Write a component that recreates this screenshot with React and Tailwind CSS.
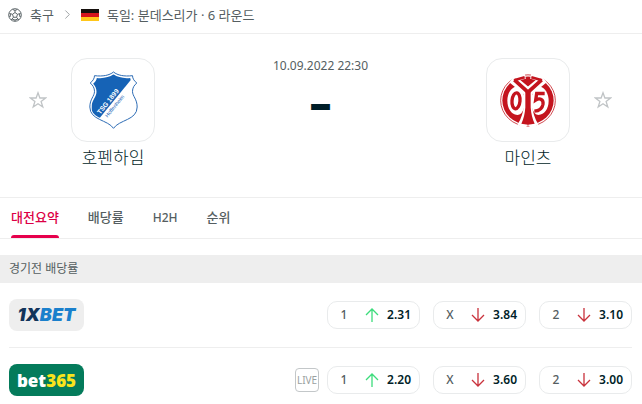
import { ChevronRight } from 'lucide-react';

const TABS = ['대전요약', '배당률', 'H2H', '순위'];

const BOOKMAKERS = [
  {
    id: '1xbet',
    live: false,
    odds: [
      { label: '1', value: '2.31', up: true },
      { label: 'X', value: '3.84', up: false },
      { label: '2', value: '3.10', up: false },
    ],
  },
  {
    id: 'bet365',
    live: true,
    odds: [
      { label: '1', value: '2.20', up: true },
      { label: 'X', value: '3.60', up: false },
      { label: '2', value: '3.00', up: false },
    ],
  },
];

const SoccerIcon = () => (
  <svg viewBox="0 0 28 28" className="h-[14px] w-[14px] shrink-0" fill="none" stroke="#5f686b" strokeWidth="2" aria-hidden="true">
    <circle cx="14" cy="14" r="12.6" />
    <path d="M14 9l5 3.7-1.9 5.8h-6.2L9 12.7zM14 9V5M19 12.7l4-1.4M17.1 18.5l2.7 3.6M10.9 18.5l-2.7 3.6M9 12.7l-4-1.4" />
    <path d="M9 2.8L14 5l5-2.2M25.8 10L23 11.3l.6 6 2.2.2M22 23.5l-2.2-1.4-5.8 2v2.3M6 23.5l2.2-1.4 5.8 2M2.2 10L5 11.3l-.6 6-2.2.2" />
  </svg>
);

const StarIcon = () => (
  <svg viewBox="0 0 18 18" className="h-[18px] w-[18px]" fill="none" stroke="#c0c4c6" strokeWidth="1.3" aria-hidden="true">
    <path d="M9 1.8L10.9 7H16.6L12.1 10.4L13.8 16L9 12.7L4.2 16L5.9 10.4L1.4 7H7.1Z" />
  </svg>
);

const GermanFlag = () => (
  <svg viewBox="0 0 18 12" className="h-3 w-[18px] shrink-0" aria-hidden="true">
    <path fill="#15100c" d="M0 0h18v4H0z" />
    <path fill="#d3141c" d="M0 4h18v4H0z" />
    <path fill="#ffc61a" d="M0 8h18v4H0z" />
  </svg>
);

const SHIELD =
  'M73 10C61 19 43 23 23 21C22 28 17 34 12 38C18 44 22 52 22 62C22 78 7 87 7 110C7 143 56 141 73 163C90 141 139 143 139 110C139 87 124 78 124 62C124 52 128 44 134 38C129 34 124 28 123 21C103 23 85 19 73 10Z';

const HoffenheimCrest = () => (
  <svg viewBox="0 0 146 174" className="h-[58px] w-[49px]" role="img" aria-label="TSG 1899 Hoffenheim">
    <defs>
      <clipPath id="tsg-shield">
        <path d={SHIELD} />
      </clipPath>
    </defs>
    <path
      d="M73 3C61 13 41 17 16 14C16 23 10 31 3 36C11 42 16 51 16 61C16 76 2 84 2 108C2 148 56 146 73 172C90 146 144 148 144 108C144 84 130 76 130 61C130 51 135 42 143 36C136 31 130 23 130 14C105 17 85 13 73 3Z"
      fill="#fff"
      stroke="#2d6cb5"
      strokeWidth="3"
    />
    <path clipPath="url(#tsg-shield)" d="M-5 -5H151L29 144L-5 160Z" fill="#1663b6" />
    <g fontFamily="'Liberation Sans', sans-serif" transform="rotate(-51 66 84)">
      <text x="54" y="88" textAnchor="middle" fontSize="20" fontWeight="700" fill="#fff">TSG 1899</text>
      <text x="56" y="111" textAnchor="middle" fontSize="16" fill="#1663b6">Hoffenheim</text>
    </g>
  </svg>
);

const MainzCrest = () => (
  <svg viewBox="0 0 168 158" className="h-[53px] w-14" role="img" aria-label="Mainz 05">
    <ellipse cx="84" cy="79" rx="82" ry="77" fill="#fff" stroke="#c8242b" strokeWidth="2.5" />
    <ellipse cx="84" cy="79" rx="77" ry="72" fill="#c4141e" />
    {/* white fields behind the digits */}
    <path d="M50 36C33 40 22 58 22 80C22 105 36 124 56 122C68 118 76 99 75 72C70 55 62 41 50 36Z" fill="#fff" />
    <path d="M118 36C135 40 146 58 146 80C146 105 132 124 112 122C100 118 92 99 93 72C98 55 106 41 118 36Z" fill="#fff" />
    {/* centre post with its two arms */}
    <path
      d="M36 14L84 54L132 14M84 50V96Q82 128 64 158M84 96Q86 128 104 158"
      fill="none"
      stroke="#fff"
      strokeWidth="26"
    />
    <path d="M40 14L76 6M128 14L92 6" stroke="#fff" strokeWidth="16" />
    <path d="M43 17L84 54L125 17" fill="none" stroke="#c4141e" strokeWidth="11" />
    <path d="M42 18L74 9M126 18L94 9" stroke="#c4141e" strokeWidth="8" />
    <path d="M76 52H92V100Q94 128 104 149Q84 154 64 149Q74 128 76 100Z" fill="#c4141e" />
    <ellipse cx="48" cy="80" rx="12" ry="24" fill="none" stroke="#c4141e" strokeWidth="10" transform="rotate(5 48 80)" />
    <path
      d="M134 58H110L107 78C120 70 131 76 129 90C127 102 117 110 103 111"
      fill="none"
      stroke="#c4141e"
      strokeWidth="10"
    />
  </svg>
);

const CRESTS = { hoffenheim: HoffenheimCrest, mainz: MainzCrest };

const Team = ({ name, crest, away }) => {
  const Crest = CRESTS[crest];
  return (
    <div className={away ? 'flex flex-row-reverse gap-6' : 'flex gap-6'}>
      <button type="button" aria-label={`${name} 즐겨찾기`} className="flex h-[84px] items-center">
        <StarIcon />
      </button>
      <div className="flex w-[84px] flex-col items-center gap-1">
        <a href="#team" className="flex h-[84px] w-full items-center justify-center rounded-2xl border border-[#e9ebec]">
          <Crest />
        </a>
        <a href="#team" className="text-[17px] leading-6 font-light whitespace-nowrap text-[#001e28]">{name}</a>
      </div>
    </div>
  );
};

const BookmakerLogo = ({ id }) => {
  if (id === '1xbet') {
    return (
      <a href="#1xbet" className="flex h-8 w-[75px] items-center justify-center rounded-lg bg-[#eeeeee] font-['Inter'] text-[18px] leading-none font-black text-[#1a80cc] italic">
        <span className="text-[#12355b]">1X</span>BET
      </a>
    );
  }
  return (
    <a href="#bet365" className="flex h-8 w-[75px] items-center justify-center rounded-lg bg-[#047b5b] font-['Noto_Sans'] text-[17px] leading-none font-black text-white">
      bet<span className="text-[#f9e41c]">365</span>
    </a>
  );
};

const Arrow = ({ up }) => (
  <svg viewBox="0 0 14 14" className="h-[14px] w-[14px]" fill="none" stroke={up ? '#3ddc7c' : '#c9323c'} strokeWidth="1.3" aria-hidden="true">
    {up ? <path d="M7 14V1M1 7l6-6 6 6" /> : <path d="M7 0v13M1 7l6 6 6-6" />}
  </svg>
);

const OddsButton = ({ label, value, up }) => (
  <button type="button" className="flex h-7 w-[93px] items-center rounded-[10px] border border-[#e9ebec] px-2 text-xs">
    <span className="w-4 text-center font-medium text-[#555e61]">{label}</span>
    <span className="flex flex-1 justify-end pr-2"><Arrow up={up} /></span>
    <span className="font-semibold text-[#001e28]">{value}</span>
  </button>
);

const App = () => (
  <div className="bg-white font-['Noto_Sans','Noto_Sans_CJK_KR',sans-serif] text-[#555e61]">
    <nav className="flex h-[34px] items-center border-b border-[#eeeeee] px-2 pb-1 text-[13px] leading-5">
      <SoccerIcon />
      <a href="#soccer" className="ml-2">축구</a>
      <ChevronRight size={15} strokeWidth={1.5} className="mx-[6px] text-[#9a9fa1]" />
      <GermanFlag />
      <a href="#league" className="ml-2">독일: 분데스리가 · 6 라운드</a>
    </nav>

    {/* Match header */}
    <div className="flex justify-between border-b border-[#eeeeee] pt-6 pr-[30px] pb-[27px] pl-[29px]">
      <Team name="호펜하임" crest="hoffenheim" />
      <div className="flex flex-col items-center">
        <p className="text-xs leading-4">10.09.2022 22:30</p>
        <p className="mt-1 text-[44px] leading-[48px] font-black text-[#001e28]">–</p>
      </div>
      <Team name="마인츠" crest="mainz" away />
    </div>

    <div role="tablist" className="flex h-[41px] gap-[29px] border-b border-[#eeeeee] px-[11px] text-[13px] font-medium">
      {TABS.map((tab, i) => (
        <button
          key={tab}
          type="button"
          role="tab"
          aria-selected={i === 0}
          className={
            i === 0
              ? 'relative text-[#dc0046] after:absolute after:inset-x-0 after:bottom-0 after:h-[3px] after:rounded-t-sm after:bg-[#e6004c]'
              : tab === 'H2H' ? 'text-xs' : ''
          }
        >
          {tab}
        </button>
      ))}
    </div>

    {/* Pre-match odds */}
    <section className="mt-4">
      <h2 className="flex h-7 items-center bg-[#eeeeee] px-[9px] text-xs">경기전 배당률</h2>
      <ul className="mr-[10px] ml-[9px] divide-y divide-[#eeeeee]">
        {BOOKMAKERS.map((b) => (
          <li key={b.id} className="box-content flex h-16 items-center justify-between">
            <BookmakerLogo id={b.id} />
            <div className="flex items-center gap-2">
              {b.live && (
                <span className="flex h-6 w-6 items-center justify-center rounded border border-[#c3c7c9] text-[10px] text-[#9a9fa1]">LIVE</span>
              )}
              <div className="flex gap-[13px]">
                {b.odds.map((o) => <OddsButton key={o.label} {...o} />)}
              </div>
            </div>
          </li>
        ))}
      </ul>
    </section>
  </div>
);

export default App;
